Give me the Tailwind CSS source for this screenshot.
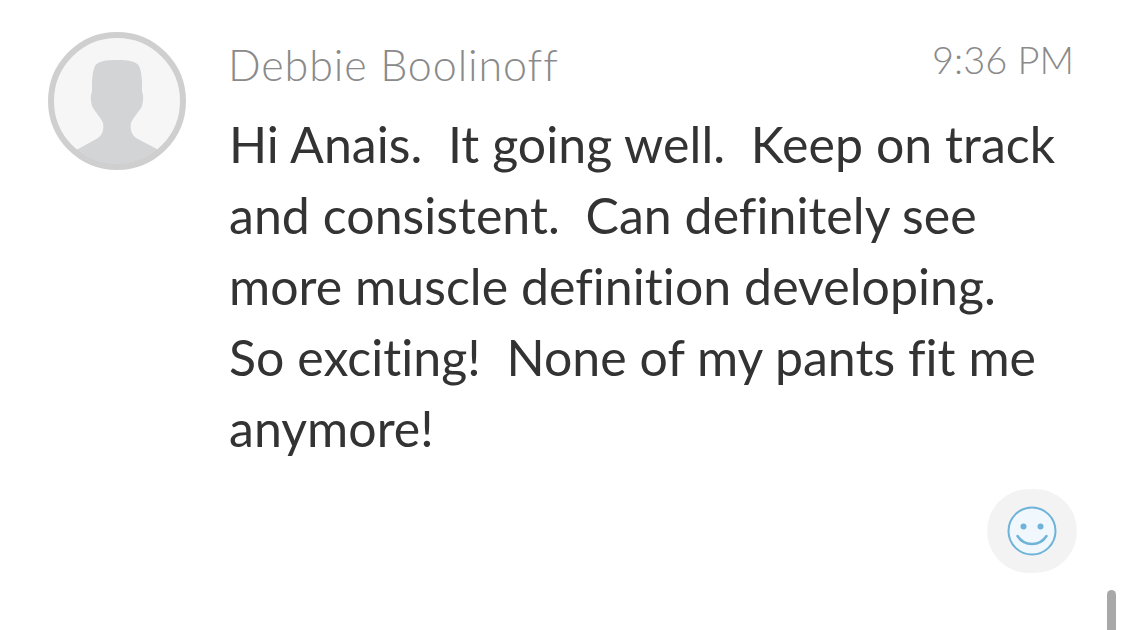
<!DOCTYPE html>
<html lang="en">
<head>
<meta charset="UTF-8">
<title>Message</title>
<script src="https://cdn.jsdelivr.net/npm/@tailwindcss/browser@4"></script>
</head>
<body class="bg-white overflow-hidden">
<div class="relative w-[1125px] h-[630px] overflow-hidden font-['Lato',sans-serif]">
  <div class="flex pl-[48px] pr-[51px] pt-[32px]">
    <!-- avatar -->
    <svg class="w-[138px] h-[138px] shrink-0" viewBox="0 0 138 138">
      <defs><clipPath id="av"><circle cx="69" cy="69" r="65"/></clipPath></defs>
      <circle cx="69" cy="69" r="65" fill="#f6f6f6"/>
      <path clip-path="url(#av)" fill="#d2d4d6" d="M69 28C80 28 88 29 91 34C93 38 94 46 94 52L94 60C96 64 95 70 94 74C91 80 86 84 83 91C82 97 83 102 88 106L107 116L125 125V140H13V125L32 116L50 106C55 102 56 97 55 91C52 84 47 80 44 74C43 70 42 64 44 60L44 52C44 46 45 38 47 34C50 29 58 28 69 28Z"/>
      <circle cx="69" cy="69" r="66" fill="none" stroke="#cfcfcf" stroke-width="6"/>
    </svg>
    <div class="flex-1 ml-[43px]">
      <div class="flex justify-between items-start">
        <span class="text-[43px] leading-[66px] font-light text-[#8a8a8a] tracking-[0.9px] -ml-[1px]">Debbie Boolinoff</span>
        <span class="text-[38px] leading-[55px] font-light text-[#8a8a8a]">9:36 PM</span>
      </div>
      <p class="mt-[11px] text-[50px] leading-[71px] font-normal text-[#333333] whitespace-pre tracking-[0.05px]">Hi Anais.  It going well.  Keep on track
and consistent.  Can definitely see
more muscle definition developing.
So exciting!  None of my pants fit me
anymore!</p>
    </div>
  </div>
  <!-- reaction button -->
  <div class="absolute left-[987px] top-[489px] w-[90px] h-[84px] rounded-full bg-[#f3f3f3] flex items-center justify-center">
    <svg class="w-[50px] h-[50px]" viewBox="0 0 50 50" fill="none">
      <circle cx="25" cy="25" r="23.5" fill="#f0f8fd" stroke="#6fb4d8" stroke-width="2"/>
      <circle cx="16.5" cy="20.5" r="3" fill="#6fb4d8"/>
      <circle cx="33.5" cy="20.5" r="3" fill="#6fb4d8"/>
      <path d="M10.5 30C14 35.500 19 38 25 38S36 35.500 39.500 30" stroke="#6fb4d8" stroke-width="2.500" stroke-linecap="round"/>
    </svg>
  </div>
  <!-- scrollbar -->
  <div class="absolute left-[1107px] top-[590px] w-[9px] h-[50px] rounded-full bg-[#a8a8a8]"></div>
</div>
</body>
</html>
